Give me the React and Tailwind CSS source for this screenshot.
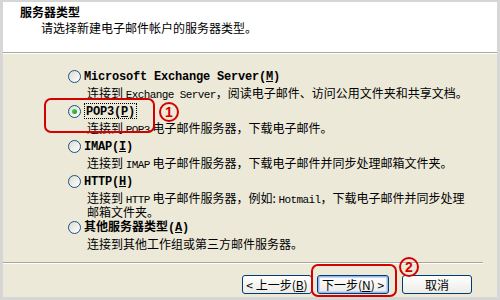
import React from "react";

const M = ({ children }) => (
  <span className="font-['Liberation_Mono',monospace] text-[11px] tracking-[-0.6px]">{children}</span>
);

const Radio = ({ checked }) => (
  <span className="relative flex h-[13px] w-[13px] shrink-0 items-center justify-center rounded-full border border-[#1c5180] bg-gradient-to-br from-[#dcdcd5] to-white">
    {checked && (
      <span className="h-[5px] w-[5px] rounded-full bg-gradient-to-br from-[#55d35b] to-[#1a9a21]" />
    )}
  </span>
);

const Label = ({ children, focus }) => (
  <span
    className={
      focus
        ? "border border-dotted border-black px-[1px] leading-[12px] font-bold text-[12px]"
        : "leading-[12px] font-bold text-[12px]"
    }
  >
    {children}
  </span>
);

const LB = ({ children }) => (
  <span className="font-['Liberation_Mono',monospace] font-bold text-[12px] tracking-[-0.2px]">{children}</span>
);

const Option = ({ checked, label, focus, children }) => (
  <div className="flex flex-col">
    <div className="flex h-4 items-center gap-[3px]">
      <Radio checked={checked} />
      <Label focus={focus}>{label}</Label>
    </div>
    <div className="mt-[3px] pl-[19px] text-[12px] leading-[11px] min-h-[12px]">{children}</div>
  </div>
);

const Btn = ({ children, def }) => (
  <button
    className={
      def
        ? "flex h-[19px] w-[72px] items-center justify-center rounded-[3px] border border-[#003c74] bg-gradient-to-b from-white to-[#ecebe6] text-[12px] leading-none text-black shadow-[inset_0_0_0_1px_#9ab8ee,inset_0_0_0_2px_#c2d6f7]"
        : "flex h-[19px] w-[70px] items-center justify-center rounded-[3px] border border-[#003c74] bg-gradient-to-b from-white to-[#ecebe6] text-[12px] leading-none text-black"
    }
  >
    {children}
  </button>
);

export default function App() {
  return (
    <div className="relative h-[300px] w-[500px] bg-[#d6d6d6] pt-[2px] pl-[3px] pr-[3px] pb-[3px] font-['Noto_Sans_CJK_SC',sans-serif] text-black">
      <div className="flex h-full flex-col bg-[#ece9d8]">
        {/* header */}
        <div className="h-[50px] bg-white pl-[17px] pt-[2px]">
          <div className="text-[12px] font-bold leading-[16px]">服务器类型</div>
          <div className="pl-[21px] text-[12px] leading-[16px]">请选择新建电子邮件帐户的服务器类型。</div>
        </div>
        <div className="h-px bg-[#aca899]" />
        <div className="h-px bg-white" />
        {/* body */}
        <div className="flex h-[208px] flex-col gap-[2px] pl-[65px] pt-[14px]">
          <Option label={<LB>Microsoft Exchange Server(<u>M</u>)</LB>}>
            连接到 <M>Exchange Server</M>，阅读电子邮件、访问公用文件夹和共享文档。
          </Option>
          <Option checked focus label={<LB>POP3(<u>P</u>)</LB>}>
            连接到 <M>POP3</M> 电子邮件服务器，下载电子邮件。
          </Option>
          <Option label={<LB>IMAP(<u>I</u>)</LB>}>
            连接到 <M>IMAP</M> 电子邮件服务器，下载电子邮件并同步处理邮箱文件夹。
          </Option>
          <Option label={<LB>HTTP(<u>H</u>)</LB>}>
            连接到 <M>HTTP</M> 电子邮件服务器，例如: <M>Hotmail</M>，下载电子邮件并同步处理
            <br />
            邮箱文件夹。
          </Option>
          <Option label={<span>其他服务器类型<LB>(<u>A</u>)</LB></span>}>
            连接到其他工作组或第三方邮件服务器。
          </Option>
        </div>
        {/* footer separator */}
        <div className="mr-[14px] h-px bg-[#aca899]" />
        <div className="mr-[14px] h-px bg-white" />
        <div className="flex justify-end pr-[25px] pt-[11px]">
          <Btn>
            &lt; 上一步(<u>B</u>)
          </Btn>
          <div className="w-[5px]" />
          <Btn def>
            下一步(<u>N</u>) &gt;
          </Btn>
          <div className="w-[13px]" />
          <Btn>取消</Btn>
        </div>
      </div>

      {/* annotations */}
      <div className="absolute left-[44px] top-[98px] h-[35px] w-[111px] rounded-[7px] border-2 border-[#d40000]" />
      <div className="absolute left-[159px] top-[102px] flex h-[20px] w-[20px] items-center justify-center rounded-full border-2 border-[#d40000] text-[14px] font-bold leading-none text-[#d40000] font-['Liberation_Sans',sans-serif]">
        1
      </div>
      <div className="absolute left-[311px] top-[264px] h-[33px] w-[86px] rounded-[7px] border-2 border-[#d40000]" />
      <div className="absolute left-[399px] top-[257px] flex h-[20px] w-[20px] items-center justify-center rounded-full border-2 border-[#d40000] text-[14px] font-bold leading-none text-[#d40000] font-['Liberation_Sans',sans-serif]">
        2
      </div>
    </div>
  );
}
